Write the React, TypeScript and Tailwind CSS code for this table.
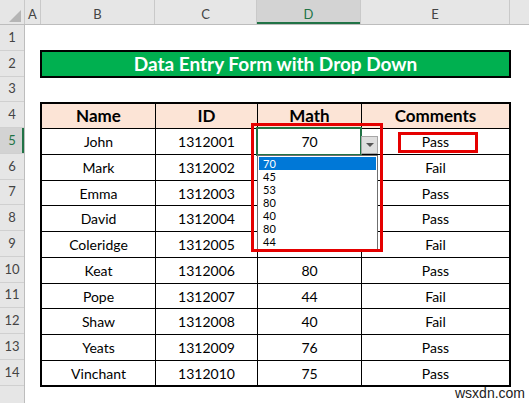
import type { ReactNode } from 'react'

// Row heights (px) for sheet rows 1..14, read off the row header.
const rowHeights: Record<number, string> = {
  1: 'h-[26px]',
  2: 'h-[26px]',
  3: 'h-[25px]',
  4: 'h-[26px]',
  5: 'h-[26px]',
  6: 'h-[26px]',
  7: 'h-[25px]',
  8: 'h-[26px]',
  9: 'h-[26px]',
  10: 'h-[26px]',
  11: 'h-[25px]',
  12: 'h-[26px]',
  13: 'h-[26px]',
  14: 'h-[26px]',
}

// Table rows 5..14 (row 4 is the header)
const data = [
  { name: 'John', id: '1312001', math: '70', comment: 'Pass', h: 'h-[26px]' },
  { name: 'Mark', id: '1312002', math: '45', comment: 'Fail', h: 'h-[26px]' },
  { name: 'Emma', id: '1312003', math: '53', comment: 'Pass', h: 'h-[25px]' },
  { name: 'David', id: '1312004', math: '80', comment: 'Pass', h: 'h-[26px]' },
  { name: 'Coleridge', id: '1312005', math: '40', comment: 'Fail', h: 'h-[26px]' },
  { name: 'Keat', id: '1312006', math: '80', comment: 'Pass', h: 'h-[26px]' },
  { name: 'Pope', id: '1312007', math: '44', comment: 'Fail', h: 'h-[25px]' },
  { name: 'Shaw', id: '1312008', math: '40', comment: 'Fail', h: 'h-[26px]' },
  { name: 'Yeats', id: '1312009', math: '76', comment: 'Pass', h: 'h-[26px]' },
  { name: 'Vinchant', id: '1312010', math: '75', comment: 'Pass', h: 'h-[24px]' },
]

const listValues = ['70', '45', '53', '80', '40', '80', '44']

function ColHead({ w, label, active }: { w: string; label: string; active?: boolean }) {
  return (
    <div
      className={`${w} flex shrink-0 items-center justify-center border-r border-[#c9c9c9] pt-[5px] text-[13px] text-[#444] ${
        active ? 'bg-[#d3d3d3] shadow-[inset_0_-2px_0_#217346]' : ''
      }`}
    >
      <span className={active ? 'text-[#217346]' : ''}>{label}</span>
    </div>
  )
}

function Cell({ w, children, bold }: { w: string; children?: ReactNode; bold?: boolean }) {
  return (
    <div
      className={`${w} flex shrink-0 items-center justify-center border-r border-black last:border-r-0 ${
        bold ? 'text-[17px] font-bold' : 'text-[14px]'
      }`}
    >
      {children}
    </div>
  )
}

export default function App() {
  return (
    <div
      className="relative h-[403px] w-[529px] overflow-hidden bg-white text-black"
      style={{ fontFamily: 'Lato, "Noto Sans", sans-serif' }}
    >
      {/* column header bar */}
      <div className="flex h-[25px] border-b border-[#bdbdbd] bg-[#e6e6e6]">
        <div className="relative w-[25px] shrink-0 border-r border-[#c9c9c9]">
          <svg className="absolute left-[9px] top-[10px]" width="12" height="12" viewBox="0 0 12 12">
            <polygon points="12,0 12,12 0,12" fill="#b5b5b5" />
          </svg>
        </div>
        <ColHead w="w-[16px]" label="A" />
        <ColHead w="w-[114px]" label="B" />
        <ColHead w="w-[102px]" label="C" />
        <ColHead w="w-[104px]" label="D" active />
        <ColHead w="w-[149px]" label="E" />
        <div className="flex-1" />
      </div>

      <div className="flex">
        {/* row numbers */}
        <div className="flex w-[25px] shrink-0 flex-col border-r border-[#bdbdbd] bg-[#e6e6e6]">
          {Array.from({ length: 15 }, (_, i) => i + 1).map((n) => (
            <div
              key={n}
              className={`${rowHeights[n] ?? 'h-[26px]'} flex shrink-0 items-center justify-center border-b border-[#d0d0d0] text-[13px] text-[#444] ${
                n === 5 ? 'bg-[#d3d3d3] text-[#217346] shadow-[inset_-2px_0_0_#217346]' : ''
              }`}
            >
              {n <= 14 ? n : ''}
            </div>
          ))}
        </div>

        {/* sheet body */}
        <div className="flex flex-1 flex-col pl-[15px]">
          <div className="h-[25px]" />
          <div className="flex h-[28px] w-[471px] items-center justify-center border-2 border-black bg-[#00b050] text-[19px] font-bold text-white">
            Data Entry Form with Drop Down
          </div>
          <div className="h-[24px]" />

          <div className="flex w-[471px] flex-col border-2 border-black">
            <div className="flex h-[25px] border-b border-black bg-[#fce4d6]">
              <Cell w="w-[114px]" bold>Name</Cell>
              <Cell w="w-[102px]" bold>ID</Cell>
              <Cell w="w-[104px]" bold>Math</Cell>
              <Cell w="w-[147px]" bold>Comments</Cell>
            </div>
            {data.map((r, i) => (
              <div
                key={r.id}
                className={`${r.h} flex ${i < data.length - 1 ? 'border-b border-black' : ''}`}
              >
                <Cell w="w-[114px]">{r.name}</Cell>
                <Cell w="w-[102px]">{r.id}</Cell>
                <Cell w="w-[104px]">{r.math}</Cell>
                <Cell w="w-[147px]">{r.comment}</Cell>
              </div>
            ))}
          </div>
        </div>
      </div>

      {/* active cell D5 */}
      <div className="absolute left-[256px] top-[127px] h-[29px] w-[106px] border-2 border-[#217346]" />

      {/* drop-down arrow button */}
      <div className="absolute left-[361px] top-[136px] flex h-[18px] w-[17px] items-center justify-center border border-[#a6a6a6] bg-[#dedede]">
        <svg width="8" height="4" viewBox="0 0 8 4">
          <polygon points="0,0 8,0 4,4" fill="#555" />
        </svg>
      </div>

      {/* drop-down list */}
      <div className="absolute left-[257px] top-[155px] flex w-[121px] flex-col border border-[#6f6f6f] bg-white p-px text-[11px] leading-[13px]">
        {listValues.map((v, i) => (
          <div
            key={i}
            className={`h-[13px] pl-[4px] ${i === 0 ? 'bg-[#0078d7] text-white' : 'text-black'}`}
          >
            {v}
          </div>
        ))}
      </div>

      {/* annotation boxes */}
      <div className="absolute left-[251px] top-[123px] h-[129px] w-[132px] border-[3.5px] border-[#e50000]" />
      <div className="absolute left-[398px] top-[132px] h-[21px] w-[80px] border-[3px] border-[#e50000]" />

      {/* watermark */}
      <div
        className="absolute left-[455px] top-[385px] text-[14px] leading-[16px] text-[#222]"
        style={{ fontFamily: '"Liberation Sans", sans-serif' }}
      >
        wsxdn.com
      </div>
    </div>
  )
}
